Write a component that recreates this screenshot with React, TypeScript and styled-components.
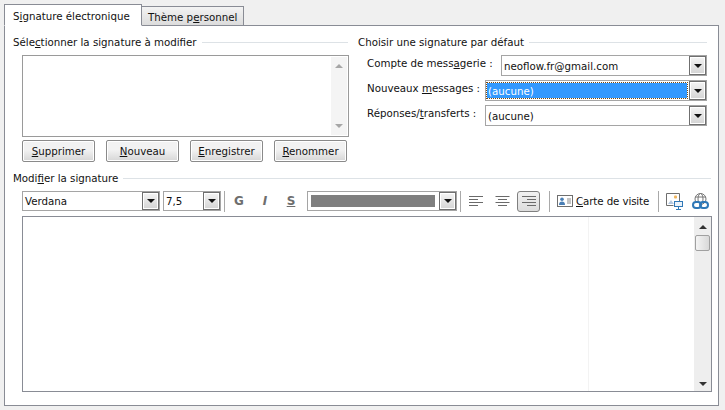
import React from 'react';
import styled, { createGlobalStyle } from 'styled-components';

const GlobalStyle = createGlobalStyle`
  html, body {
    margin: 0;
    padding: 0;
    background: #f0f0f0;
  }
  body {
    font-family: "DejaVu Sans", Verdana, sans-serif;
    font-size: 10.25px;
    color: #111;
  }
`;

const Page = styled.div`
  width: 725px;
  height: 410px;
  box-sizing: border-box;
  padding: 4px 6px 4px 4px;
  display: flex;
  flex-direction: column;
  overflow: hidden;
`;

const TabBar = styled.div`
  display: flex;
  align-items: flex-end;
  height: 22px;
  flex: none;
  position: relative;
  z-index: 1;
  margin-bottom: -1px;
`;

const Tab = styled.div<{ $active?: boolean }>`
  box-sizing: border-box;
  height: ${p => (p.$active ? 22 : 20)}px;
  width: ${p => (p.$active ? 138 : 102)}px;
  padding: ${p => (p.$active ? '4px 0 0 8px' : '3px 0 0 6px')};
  border: 1px solid #898c95;
  border-bottom: ${p => (p.$active ? '1px solid #fff' : '1px solid #898c95')};
  border-left-width: ${p => (p.$active ? 1 : 0)}px;
  background: ${p => (p.$active ? '#fff' : 'linear-gradient(#f3f3f3, #dcdcdc)')};
  white-space: nowrap;
  line-height: 14px;
`;

const Panel = styled.div`
  box-sizing: border-box;
  flex: 1;
  background: #fff;
  border: 1px solid #898c95;
  padding: 9px 7px 13px 8px;
  display: flex;
  flex-direction: column;
`;

const TopRow = styled.div`
  display: grid;
  grid-template-columns: 335px 349px;
  column-gap: 10px;
  height: 127px;
  flex: none;
`;

const GroupTitle = styled.div`
  display: flex;
  align-items: center;
  gap: 5px;
  height: 15px;
  line-height: 15px;
  white-space: nowrap;
  &::after {
    content: '';
    flex: 1;
    height: 1px;
    background: #dde2e6;
  }
`;

const Indented = styled.div`
  margin: 5px 0 0 9px;
`;

const ListBox = styled.div`
  box-sizing: border-box;
  width: 327px;
  height: 82px;
  border: 1px solid #9a9a9a;
  display: flex;
  justify-content: flex-end;
  padding: 1px;
`;

const ListScroll = styled.div`
  width: 16px;
  background: #f4f4f4;
  display: flex;
  flex-direction: column;
  justify-content: space-between;
  align-items: center;
  padding: 7px 0;
`;

const Arrow = styled.span<{ $up?: boolean; $color?: string }>`
  width: 0;
  height: 0;
  border-left: 4px solid transparent;
  border-right: 4px solid transparent;
  ${p => (p.$up ? 'border-bottom' : 'border-top')}: 4px solid ${p => p.$color || '#a6a6a6'};
`;

const Buttons = styled.div`
  display: flex;
  gap: 11px;
  margin-top: 3px;
`;

const PushButton = styled.div`
  box-sizing: border-box;
  width: 73px;
  height: 22px;
  border: 1px solid #8a8a8a;
  border-radius: 2px;
  box-shadow: inset 0 0 0 1px #fff;
  background: linear-gradient(#f2f2f2 45%, #d6d6d6);
  text-align: center;
  line-height: 20px;
`;

const ChoiceGrid = styled.div`
  margin: 5px 0 0 9px;
  display: flex;
  flex-direction: column;
  gap: 4px;
`;

const ChoiceRow = styled.div`
  display: flex;
  justify-content: space-between;
  align-items: flex-start;
  height: 21px;
`;

const ChoiceLabel = styled.span`
  line-height: 15px;
  white-space: nowrap;
  margin-top: 1px;
`;

const Combo = styled.div<{ $width: number; $height?: number; $gap?: number }>`
  box-sizing: border-box;
  width: ${p => p.$width}px;
  height: ${p => p.$height || 21}px;
  margin-left: ${p => p.$gap || 0}px;
  border: 1px solid #a5a5a5;
  background: #fff;
  display: flex;
  align-items: stretch;
  flex: none;
`;

const ComboText = styled.div<{ $selected?: boolean }>`
  flex: 1;
  margin: 2px 2px 2px 1px;
  padding-left: 1px;
  display: flex;
  align-items: center;
  white-space: nowrap;
  overflow: hidden;
  color: ${p => (p.$selected ? '#fff' : 'inherit')};
  background: ${p => (p.$selected ? '#3399ff' : 'transparent')};
  outline: ${p => (p.$selected ? '1px dotted #7a4a10' : 'none')};
`;

const ComboButton = styled.div`
  box-sizing: border-box;
  width: 17px;
  flex: none;
  border: 1px solid #6f6f6f;
  background: linear-gradient(#f4f4f4, #d4d4d4);
  display: flex;
  align-items: center;
  justify-content: center;
  box-shadow: inset 0 0 0 1px #fff;
`;

const EditSection = styled.div`
  flex: 1;
  display: flex;
  flex-direction: column;
  margin-top: 9px;
  min-height: 0;
`;

const Toolbar = styled.div`
  display: flex;
  align-items: center;
  height: 22px;
  margin: 4px 0 4px 9px;
  flex: none;
`;

const Divider = styled.span<{ $left: number; $right: number }>`
  width: 1px;
  height: 21px;
  background: #a9a9a9;
  margin: 0 ${p => p.$right}px 0 ${p => p.$left}px;
  flex: none;
`;

const StyleButton = styled.span<{ $italic?: boolean; $underline?: boolean }>`
  width: 26px;
  text-align: center;
  flex: none;
  font-size: 12px;
  font-weight: 700;
  color: #6e6e6e;
  font-style: ${p => (p.$italic ? 'italic' : 'normal')};
  text-decoration: ${p => (p.$underline ? 'underline' : 'none')};
`;

const ColorSwatch = styled.div`
  flex: 1;
  margin: 3px 4px 3px 3px;
  background: #7f7f7f;
`;

const AlignButton = styled.span<{ $active?: boolean; $gap?: number }>`
  box-sizing: border-box;
  width: 23px;
  height: 21px;
  margin-left: ${p => p.$gap || 0}px;
  flex: none;
  display: flex;
  align-items: center;
  justify-content: center;
  border: 1px solid ${p => (p.$active ? '#7f7f7f' : 'transparent')};
  border-radius: 3px;
  background: ${p => (p.$active ? 'linear-gradient(#f1f1f1, #dcdcdc)' : 'transparent')};
`;

const CardLabel = styled.span`
  margin-left: 3px;
  width: 73px;
  flex: none;
  white-space: nowrap;
  letter-spacing: -0.1px;
`;

const IconSlot = styled.span<{ $gap?: number }>`
  display: flex;
  flex: none;
  margin-left: ${p => p.$gap || 0}px;
`;

const Editor = styled.div`
  box-sizing: border-box;
  flex: 1;
  margin-left: 9px;
  width: 690px;
  border: 1px solid #898c95;
  display: flex;
  min-height: 0;
`;

const EditArea = styled.div`
  flex: 1;
  display: flex;
`;

const MarginGuide = styled.div`
  width: 565px;
  border-right: 1px solid #f3f3f3;
`;

const VScroll = styled.div`
  width: 17px;
  flex: none;
  background: #eeeeee;
  display: flex;
  flex-direction: column;
  align-items: center;
`;

const ScrollThumb = styled.div`
  box-sizing: border-box;
  width: 15px;
  height: 16px;
  margin-top: 6px;
  border: 1px solid #a0a0a0;
  border-radius: 2px;
  background: linear-gradient(90deg, #f4f4f4, #d8d8d8);
`;

const ScrollTop = styled.div`
  height: 12px;
  display: flex;
  align-items: flex-end;
`;

const ScrollSpacer = styled.div`
  flex: 1;
`;

const ScrollBottom = styled.div`
  height: 9px;
  display: flex;
  align-items: flex-start;
`;

const AlignIcon = ({ right, center }: { right?: boolean; center?: boolean }) => (
  <svg width="15" height="11" viewBox="0 0 15 11">
    {[14, 9, 14, 9].map((w, i) => (
      <rect
        key={i}
        x={right ? 15 - w : center ? (15 - w) / 2 : 0}
        y={i * 3}
        width={w}
        height="1"
        fill="#6a6a6a"
      />
    ))}
  </svg>
);

const CardIcon = () => (
  <svg width="16" height="12" viewBox="0 0 16 12">
    <rect x="0.5" y="0.5" width="15" height="11" fill="#fff" stroke="#6e6e6e" />
    <circle cx="5" cy="4.200" r="1.800" fill="#4a7fb5" />
    <path d="M2 10c0-2.400 1.300-3.400 3-3.400S8 7.600 8 10z" fill="#4a7fb5" />
    <path d="M10 4h4M10 6h4M10 8h4" stroke="#8a8a8a" strokeWidth="1" />
  </svg>
);

const PictureIcon = () => (
  <svg width="17" height="17" viewBox="0 0 17 17">
    <path d="M13.500 8V.5H.5v12h7" fill="#fff" stroke="#6e6e6e" />
    <path d="M2 11l3-4 3 4z" fill="#b3c8e0" />
    <rect x="8" y="2.500" width="3" height="3" rx="1" fill="#f0b45a" />
    <rect x="8" y="8" width="9" height="6" fill="#2f78b7" />
    <rect x="9" y="9" width="7" height="4" fill="#eaf2fa" />
    <path d="M10 16.500h5M12.500 14v2.500" stroke="#2f78b7" />
  </svg>
);

const LinkGlobeIcon = () => (
  <svg width="17" height="17" viewBox="0 0 17 17">
    <circle cx="8.500" cy="6" r="5.500" fill="#fff" stroke="#777" />
    <ellipse cx="8.500" cy="6" rx="2.500" ry="5.500" fill="none" stroke="#777" />
    <path d="M3 4h11" stroke="#777" />
    <rect x="1" y="9" width="8" height="6" rx="3" fill="#fff" stroke="#2f78b7" strokeWidth="2" />
    <rect x="8" y="9" width="8" height="6" rx="3" fill="none" stroke="#2f78b7" strokeWidth="2" />
  </svg>
);

const ComboArrow = () => <Arrow $color="#111" />;

export default function App() {
  return (
    <Page>
      <GlobalStyle />
      <TabBar>
        <Tab $active>
          S<u>i</u>gnature électronique
        </Tab>
        <Tab>
          Thème p<u>e</u>rsonnel
        </Tab>
      </TabBar>
      <Panel>
        <TopRow>
          <div>
            <GroupTitle>
              <span>
                Séle<u>c</u>tionner la signature à modifier
              </span>
            </GroupTitle>
            <Indented>
              <ListBox>
                <ListScroll>
                  <Arrow $up />
                  <Arrow />
                </ListScroll>
              </ListBox>
              <Buttons>
                <PushButton>
                  <u>S</u>upprimer
                </PushButton>
                <PushButton>
                  <u>N</u>ouveau
                </PushButton>
                <PushButton>
                  <u>E</u>nregistrer
                </PushButton>
                <PushButton>
                  <u>R</u>enommer
                </PushButton>
              </Buttons>
            </Indented>
          </div>
          <div>
            <GroupTitle>
              <span>Choisir une signature par défaut</span>
            </GroupTitle>
            <ChoiceGrid>
              <ChoiceRow>
                <ChoiceLabel>
                  Compte de mess<u>a</u>gerie :
                </ChoiceLabel>
                <Combo $width={206}>
                  <ComboText>neoflow.fr@gmail.com</ComboText>
                  <ComboButton>
                    <ComboArrow />
                  </ComboButton>
                </Combo>
              </ChoiceRow>
              <ChoiceRow>
                <ChoiceLabel>
                  Nouveaux <u>m</u>essages :
                </ChoiceLabel>
                <Combo $width={222}>
                  <ComboText $selected>(aucune)</ComboText>
                  <ComboButton>
                    <ComboArrow />
                  </ComboButton>
                </Combo>
              </ChoiceRow>
              <ChoiceRow>
                <ChoiceLabel>
                  Réponses/<u>t</u>ransferts :
                </ChoiceLabel>
                <Combo $width={222}>
                  <ComboText>(aucune)</ComboText>
                  <ComboButton>
                    <ComboArrow />
                  </ComboButton>
                </Combo>
              </ChoiceRow>
            </ChoiceGrid>
          </div>
        </TopRow>
        <EditSection>
          <GroupTitle>
            <span>
              Modi<u>f</u>ier la signature
            </span>
          </GroupTitle>
          <Toolbar>
            <Combo $width={138} $height={20}>
              <ComboText>Verdana</ComboText>
              <ComboButton>
                <ComboArrow />
              </ComboButton>
            </Combo>
            <Combo $width={58} $height={20} $gap={3}>
              <ComboText>7,5</ComboText>
              <ComboButton>
                <ComboArrow />
              </ComboButton>
            </Combo>
            <Divider $left={3} $right={1} />
            <StyleButton>G</StyleButton>
            <StyleButton $italic>I</StyleButton>
            <StyleButton $underline>S</StyleButton>
            <Combo $width={150} $height={20} $gap={3}>
              <ColorSwatch />
              <ComboButton>
                <ComboArrow />
              </ComboButton>
            </Combo>
            <Divider $left={3} $right={4} />
            <AlignButton>
              <AlignIcon />
            </AlignButton>
            <AlignButton $gap={3}>
              <AlignIcon center />
            </AlignButton>
            <AlignButton $active $gap={3}>
              <AlignIcon right />
            </AlignButton>
            <Divider $left={9} $right={7} />
            <IconSlot>
              <CardIcon />
            </IconSlot>
            <CardLabel>
              <u>C</u>arte de visite
            </CardLabel>
            <Divider $left={9} $right={7} />
            <IconSlot>
              <PictureIcon />
            </IconSlot>
            <IconSlot $gap={9}>
              <LinkGlobeIcon />
            </IconSlot>
          </Toolbar>
          <Editor>
            <EditArea>
              <MarginGuide />
            </EditArea>
            <VScroll>
              <ScrollTop>
                <Arrow $up $color="#333" />
              </ScrollTop>
              <ScrollThumb />
              <ScrollSpacer />
              <ScrollBottom>
                <Arrow $color="#333" />
              </ScrollBottom>
            </VScroll>
          </Editor>
        </EditSection>
      </Panel>
    </Page>
  );
}
